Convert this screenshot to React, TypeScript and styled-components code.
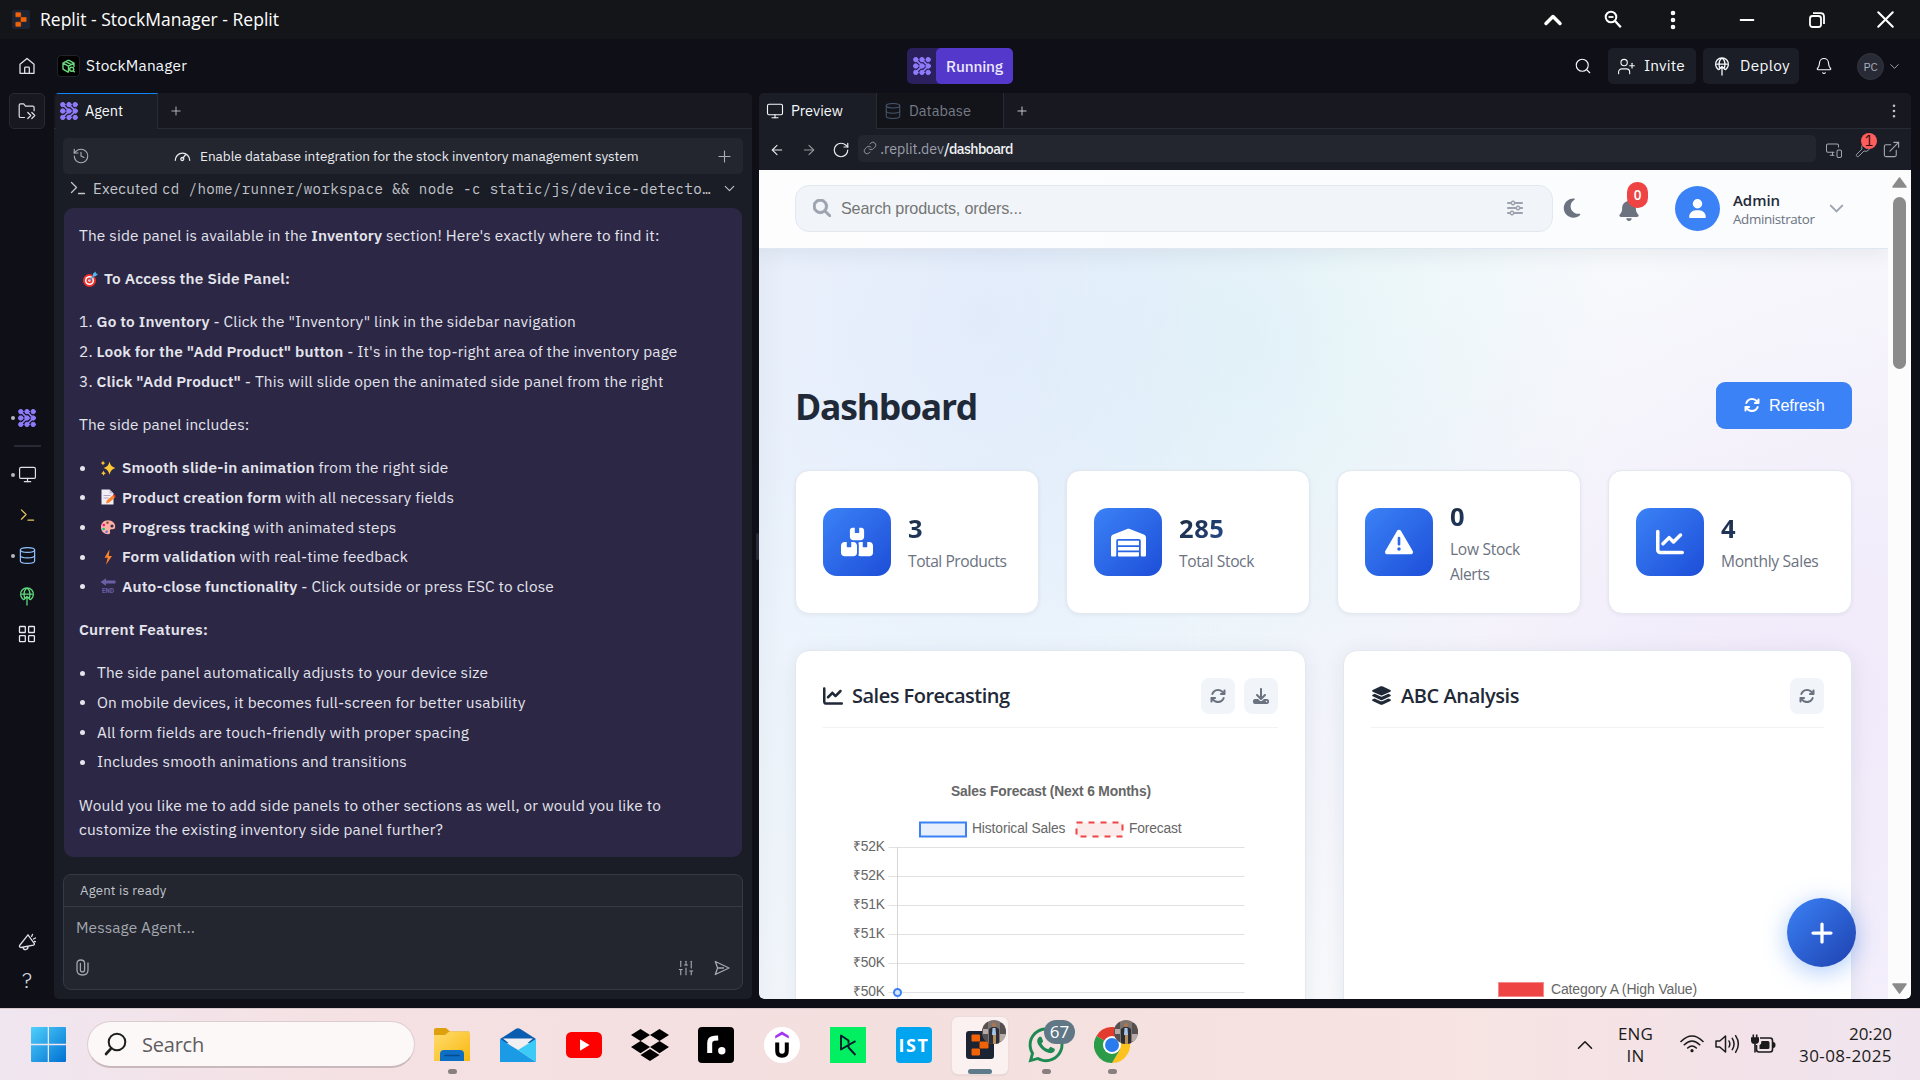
import React, { useLayoutEffect, useRef, useState } from "react";
import styled, { createGlobalStyle, css } from "styled-components";
import {
  ArrowLeft, ArrowRight, Bell, ChevronDown, ChevronUp, Database, EllipsisVertical, ExternalLink,
  History, Link, Minus, Monitor, MonitorSmartphone, Plus,
  RotateCw, Search, UserPlus, Wrench, X, SlidersVertical,
} from "lucide-react";
import {
  FaArrowsRotate, FaBell, FaBoxesStacked, FaChartLine, FaDownload, FaDropbox, FaLayerGroup,
  FaMagnifyingGlass, FaMoon, FaPlus, FaSliders, FaTriangleExclamation, FaUser, FaWarehouse, FaWhatsapp,
} from "react-icons/fa6";

const PLEX = `"IBM Plex Sans", Roboto, "Liberation Sans", sans-serif`;
const SEGOE = `"Segoe UI", "Open Sans", "Noto Sans", sans-serif`;
const ARIAL = `"Liberation Sans", Arial, sans-serif`;
const MONO = `"IBM Plex Mono", "DejaVu Sans Mono", "Liberation Mono", monospace`;

const Global = createGlobalStyle`
  *, *::before, *::after { box-sizing: border-box; }
  body { margin: 0; background: #0f0f17; overflow: hidden; }
  ul, ol, p, h1, h2 { margin: 0; padding: 0; }
  svg { display: block; flex: none; }
`;

/* A single line of text whose tracking is adjusted so that it spans `w` pixels. */
const Line = styled.span`
  display: inline-block;
  white-space: pre;
  flex: none;
`;
function Fit({ w, children }: { w: number; children: React.ReactNode }) {
  const ref = useRef<HTMLSpanElement>(null);
  const [spacing, setSpacing] = useState(0);
  useLayoutEffect(() => {
    const el = ref.current;
    if (!el) return;
    const count = (el.textContent || "").length || 1;
    setSpacing((w - el.getBoundingClientRect().width) / count);
  }, [w]);
  return <Line ref={ref} style={{ letterSpacing: spacing }}>{children}</Line>;
}

const Screen = styled.div`
  width: 1920px;
  height: 1080px;
  display: flex;
  flex-direction: column;
  overflow: hidden;
  background: #0f0f17;
  font-family: ${PLEX};
  color: #f5f9fc;
`;

/* ---------- window title bar ---------- */
const TitleBar = styled.div`
  height: 39px;
  flex: none;
  display: flex;
  align-items: center;
  padding: 0 0 0 12px;
  background: #141519;
  color: #fff;
  font: 400 17.5px ${SEGOE};
`;
const TitleText = styled.div`
  margin-left: 10px;
  padding-bottom: 1px;
  flex: 1;
`;
const WindowControls = styled.div`
  display: grid;
  grid-template-columns: 60px 60px 60px 88px 51px 78px;
  justify-items: center;
  align-items: center;
  > :last-child { margin-left: 9px; }
`;

/* ---------- workspace header ---------- */
const Header = styled.div`
  height: 54px;
  flex: none;
  display: grid;
  grid-template-columns: 907px 106px 1fr;
  align-items: center;
  font-size: 15.4px;
`;
const HeaderLeft = styled.div`
  display: flex;
  align-items: center;
  padding-left: 18px;
`;
const HeaderLabel = styled.div`
  padding-bottom: 2px;
`;
const AppBadge = styled.div`
  width: 23px;
  height: 22px;
  margin: 0 6px 0 21px;
  border-radius: 4px;
  border: 1px solid #22232a;
  background: #000;
  color: #6cd97e;
  display: grid;
  place-items: center;
`;
const RunPill = styled.div`
  height: 36px;
  display: flex;
  border-radius: 5px;
  background: #2b1f5e;
  overflow: hidden;
`;
const RunIcon = styled.div`
  width: 29px;
  display: grid;
  place-items: center;
`;
const RunLabel = styled.div`
  flex: 1;
  display: grid;
  place-items: center;
  border-radius: 5px;
  background: #5438cc;
  font-weight: 500;
  color: #ece8fb;
`;
const HeaderRight = styled.div`
  display: flex;
  align-items: center;
  justify-content: flex-end;
  padding-right: 18px;
`;
const HeaderButton = styled.div<{ $w: number; $ml: number }>`
  width: ${(p) => p.$w}px;
  height: 36px;
  margin-left: ${(p) => p.$ml}px;
  padding-left: 9px;
  display: flex;
  align-items: center;
  gap: 8px;
  border-radius: 5px;
  background: #1b1e26;
`;
const Avatar = styled.div`
  width: 27px;
  height: 27px;
  margin: 0 3px 0 24px;
  border-radius: 50%;
  border: 1px solid #34363f;
  background: #282a35;
  color: #a9b0be;
  font-size: 11.5px;
  display: grid;
  place-items: center;
`;

/* ---------- work area ---------- */
const Work = styled.div`
  height: 915px;
  flex: none;
  display: grid;
  grid-template-columns: 54px 698px 7px 1152px 9px;
  grid-template-rows: 906px;
`;
const Rail = styled.div`
  display: flex;
  flex-direction: column;
  align-items: center;
  color: #dde1e8;
`;
const FolderButton = styled.div`
  width: 36px;
  height: 36px;
  border: 1px solid #282a35;
  border-radius: 5px;
  background: #171820;
  display: grid;
  place-items: center;
`;
const RailItem = styled.div<{ $h: number; $mt?: number; $color?: string }>`
  width: 100%;
  height: ${(p) => p.$h}px;
  margin-top: ${(p) => p.$mt || 0}px;
  color: ${(p) => p.$color || "#dde1e8"};
  display: grid;
  grid-template-columns: 15px 1fr 15px;
  align-items: center;
  justify-items: center;
  font-size: 21px;
  font-weight: 300;
`;
const RailDot = styled.i<{ $on?: boolean }>`
  width: 4px;
  height: 4px;
  justify-self: end;
  border-radius: 50%;
  background: ${(p) => (p.$on ? "#b4b7c0" : "transparent")};
`;
const RailRule = styled.div`
  width: 27px;
  height: 2px;
  margin: 7px 0 5px;
  background: #282a35;
`;

const Panel = styled.div`
  display: flex;
  flex-direction: column;
  min-width: 0;
  border-radius: 5px;
  overflow: hidden;
  background: #1a1d25;
`;
const TabBar = styled.div`
  height: 36px;
  flex: none;
  display: flex;
  background: #171820;
  font-size: 14.6px;
  box-shadow: inset 0 -1px #282a35;
`;
const Tab = styled.div<{ $w: number; $kind: "focus" | "open" | "idle" }>`
  width: ${(p) => p.$w}px;
  display: flex;
  align-items: center;
  gap: 7px;
  padding: 0 0 1px 7px;
  border-right: 1px solid #282a35;
  background: #1a1d25;
  ${(p) => p.$kind === "focus" && css`border-top: 1px solid #0f87ff; margin-left: 2px; padding: 0 0 2px 4px;`}
  ${(p) => p.$kind === "idle" && css`background: #13141a; color: #767b87; box-shadow: inset 0 -1px #282a35;`}
`;
const TabAdd = styled.div`
  width: 36px;
  display: grid;
  place-items: center;
  color: #c2c8cc;
`;
const TabMenu = styled.div`
  margin-left: auto;
  width: 35px;
  display: grid;
  place-items: center;
  color: #c2c8cc;
`;
const Splitter = styled.div`
  display: grid;
  place-items: center end;
  &::after {
    content: "";
    width: 3px;
    height: 27px;
    background: #282a35;
    border-radius: 2px;
  }
`;

/* ---------- agent panel ---------- */
const AgentBody = styled.div`
  flex: 1;
  display: flex;
  flex-direction: column;
  padding: 9px 9px 9px;
`;
const HistoryBar = styled.div`
  height: 36px;
  display: flex;
  align-items: center;
  padding: 0 9px;
  border-radius: 5px;
  background: #23262f;
  color: #a9adb7;
  font-size: 13.6px;
`;
const HistoryTitle = styled.div`
  flex: 1;
  display: flex;
  align-items: center;
  gap: 9px;
  padding: 0 0 1px 84px;
  color: #e8eaee;
`;
const ExecRow = styled.div`
  height: 34px;
  padding: 0 5px 6px 7px;
  display: flex;
  align-items: center;
  color: #c2c5cd;
  font-size: 15px;
`;
const ExecWord = styled.span`
  margin: 0 4px 0 7px;
`;
const Command = styled.span`
  flex: 1;
  font: 400 14.2px ${MONO};
`;
const Message = styled.div`
  height: 649px;
  margin: 0 1px;
  padding: 15px;
  display: flex;
  flex-direction: column;
  gap: 18.5px;
  border-radius: 9px;
  background: #2b2745;
  color: #e4e4ec;
  font-size: 15.4px;
  line-height: 24.7px;
  b { font-weight: 600; }
`;
const MessageList = styled.ul`
  list-style: none;
  display: flex;
  flex-direction: column;
  gap: 5px;
`;
const MessageItem = styled.li`
  height: 24.7px;
  display: flex;
  align-items: center;
`;
const Bullet = styled.i`
  width: 5px;
  height: 5px;
  margin: 1px 12px 0 1px;
  border-radius: 50%;
  background: #e4e4ec;
`;
const Emoji = styled.span`
  display: inline-grid;
  place-items: center;
  width: 18px;
  margin: 0 5px 0 2px;
`;
const Paragraph = styled.p`
  display: flex;
  align-items: center;
  flex-wrap: wrap;
`;
const Composer = styled.div`
  margin-top: 17px;
  height: 116px;
  display: flex;
  flex-direction: column;
  border: 1px solid #373a45;
  border-radius: 8px;
  background: #23262f;
  color: #a3a7b0;
  font-size: 15.4px;
`;
const ComposerStatus = styled.div`
  height: 32px;
  flex: none;
  padding: 0 0 2px 16px;
  display: flex;
  align-items: center;
  border-bottom: 1px solid #373a45;
  color: #c2c5cd;
  font-size: 13.2px;
`;
const ComposerText = styled.div`
  height: 42px;
  padding: 0 0 2px 12px;
  display: flex;
  align-items: center;
`;
const ComposerTools = styled.div`
  height: 38px;
  padding: 0 12px 1px 12px;
  display: flex;
  align-items: center;
  gap: 19px;
  > :first-child { margin-right: auto; }
`;

/* ---------- preview panel ---------- */
const UrlRow = styled.div`
  height: 41px;
  flex: none;
  display: flex;
  align-items: center;
  padding: 0 10px;
  font-size: 14.2px;
  color: #e8eaee;
`;
const UrlBox = styled.div`
  width: 959px;
  height: 27px;
  margin: -2px 9px 0 8px;
  padding: 0 0 1px 5px;
  display: flex;
  align-items: center;
  border-radius: 5px;
  background: #23262f;
  color: #9a9fab;
`;
const UrlPath = styled.span`
  color: #f0f2f5;
  font-weight: 500;
`;
const NavIcon = styled.span<{ $w: number; $dim?: boolean }>`
  width: ${(p) => p.$w}px;
  opacity: ${(p) => (p.$dim ? 0.6 : 1)};
`;
const DevTool = styled.span`
  position: relative;
  margin: 0 11px 0 12px;
`;
const DevBadge = styled.span`
  position: absolute;
  top: -9px;
  left: 6px;
  width: 16px;
  height: 16px;
  border-radius: 50%;
  background: #ff5c5c;
  color: #34070a;
  font-size: 14px;
  line-height: 16px;
  text-align: center;
`;
const PageFrame = styled.div`
  flex: 1;
  display: flex;
  min-height: 0;
  border-radius: 0 0 5px 5px;
  overflow: hidden;
`;
const Page = styled.div`
  position: relative;
  width: 1129px;
  height: 829px;
  overflow: hidden;
  color: #1f2937;
  font-family: ${SEGOE};
  background:
    linear-gradient(90deg, rgba(60, 70, 90, 0.04), rgba(60, 70, 90, 0) 26px),
    radial-gradient(ellipse 380px 400px at 225px 150px, rgba(208, 218, 250, 0.34), transparent),
    radial-gradient(ellipse 360px 360px at 500px 170px, rgba(213, 241, 244, 0.5), transparent),
    radial-gradient(ellipse 620px 460px at 1010px 520px, rgba(232, 216, 248, 0.42), transparent),
    radial-gradient(ellipse 500px 500px at 250px 400px, rgba(222, 238, 252, 0.4), transparent),
    linear-gradient(115deg, #eff5fc, #f6f9fc 45%, #f8fafc 60%, #f5f2fb);
`;
const ScrollTrack = styled.div`
  width: 23px;
  display: flex;
  flex-direction: column;
  align-items: center;
  padding: 7px 0 5px;
  background: #fcfcfc;
`;
const ScrollThumb = styled.div`
  width: 13px;
  height: 172px;
  margin: 9px 0 auto;
  border-radius: 7px;
  background: #8b8b8b;
`;
const SiteHeader = styled.div`
  height: 79px;
  padding: 0 0 2px 36px;
  display: flex;
  align-items: center;
  border-bottom: 1px solid #dfe7f0;
  background: linear-gradient(90deg, #fdfdfe, #fafcfe);
  box-shadow: 0 4px 22px rgba(30, 41, 59, 0.08);
  color: #6b7280;
`;
const SearchField = styled.div`
  width: 758px;
  height: 47px;
  padding: 0 29px 0 17px;
  display: flex;
  align-items: center;
  border: 1px solid #e2e8f0;
  border-radius: 14px;
  background: #f1f5f9;
  color: #9ca3af;
  font: 400 16.2px ${ARIAL};
`;
const SearchHint = styled.span`
  flex: 1;
  margin-left: 10px;
  color: #757575;
`;
const HeadIcon = styled.div<{ $w: number; $ml: number; $top?: number }>`
  position: relative;
  width: ${(p) => p.$w}px;
  margin: ${(p) => p.$top || 0}px 0 0 ${(p) => p.$ml}px;
`;
const AlertCount = styled.span`
  position: absolute;
  left: 9px;
  top: -17px;
  width: 21px;
  height: 26px;
  border-radius: 10px;
  background: #ef4444;
  color: #fff;
  font-size: 13.5px;
  font-weight: 600;
  line-height: 26px;
  text-align: center;
`;
const UserCircle = styled.div`
  width: 45px;
  height: 45px;
  margin: 0 13px 0 37px;
  border-radius: 50%;
  background: #3b82f6;
  color: #fff;
  display: grid;
  place-items: center;
`;
const UserMeta = styled.div`
  width: 81px;
  display: flex;
  flex-direction: column;
  align-items: flex-start;
  font-size: 13.4px;
  line-height: 18px;
  margin: 1px 11px 0 0;
`;
const UserName = styled.div`
  font-size: 15px;
  font-weight: 600;
  color: #1f2937;
  line-height: 20px;
`;
const Main = styled.div`
  padding: 133px 36px 0;
  display: flex;
  flex-direction: column;
`;
const TitleRow = styled.div`
  height: 47px;
  display: flex;
  align-items: center;
  justify-content: space-between;
`;
const PageTitle = styled.h1`
  font-size: 35.5px;
  font-weight: 700;
  line-height: 47px;
  margin-top: 2px;
`;
const RefreshButton = styled.div`
  width: 136px;
  height: 47px;
  display: flex;
  align-items: center;
  padding: 0 0 1px 28px;
  gap: 9px;
  border-radius: 9px;
  background: #3b82f6;
  color: #fff;
  font: 400 16.2px ${ARIAL};
`;
const Stats = styled.div`
  margin-top: 41px;
  display: grid;
  grid-template-columns: repeat(4, 1fr);
  gap: 27px;
`;
const StatCard = styled.div`
  height: 144px;
  padding-left: 27px;
  display: flex;
  align-items: center;
  gap: 17px;
  border: 1px solid #e2e8f0;
  border-radius: 14px;
  background: #fff;
  box-shadow: 0 1px 4px rgba(30, 41, 59, 0.06);
`;
const StatIcon = styled.div`
  width: 68px;
  height: 68px;
  border-radius: 14px;
  background: linear-gradient(135deg, #3b82f6, #1d4ed8);
  color: #fff;
  display: grid;
  place-items: center;
`;
const StatText = styled.div`
  color: #6b7280;
  font-size: 15.6px;
  line-height: 25px;
`;
const StatValue = styled.div`
  width: 118px;
  font-size: 25.5px;
  font-weight: 700;
  line-height: 36px;
  margin-bottom: 3px;
  background: linear-gradient(135deg, #1f2937, #1f3a68 30%, #3b82f6);
  background-clip: text;
  color: transparent;
`;
const StatLabel = styled.div`
  display: flex;
  flex-direction: column;
  align-items: flex-start;
`;
const Charts = styled.div`
  margin-top: 36px;
  display: grid;
  grid-template-columns: 1fr 1fr;
  gap: 37px;
`;
const ChartCard = styled.div`
  height: 500px;
  padding: 0 27px;
  border: 1px solid #e2e8f0;
  border-radius: 14px;
  background: #fff;
  box-shadow: 0 4px 22px rgba(30, 41, 59, 0.08);
`;
const ChartHead = styled.div`
  height: 77px;
  padding-top: 13px;
  display: flex;
  align-items: center;
  gap: 9px;
  border-bottom: 1px solid #f1f2f5;
`;
const ChartTitle = styled.h2`
  flex: 1;
  display: flex;
  align-items: center;
  gap: 9px;
  font-size: 20px;
  font-weight: 600;
  font-family: ${SEGOE};
`;
const ToolButton = styled.div`
  width: 34px;
  height: 36px;
  border-radius: 8px;
  background: #f1f5f9;
  color: #6b7280;
  display: grid;
  place-items: center;
`;
const AbcLegend = styled.div`
  margin-top: 253px;
  display: flex;
  align-items: center;
  justify-content: center;
  gap: 7px;
  color: #666;
  font: 400 14px ${ARIAL};
`;
const RedSwatch = styled.i`
  width: 46px;
  height: 15px;
  border: 1px solid #f58a8a;
  background: #ef4444;
`;
const Fab = styled.div`
  position: absolute;
  right: 32px;
  bottom: 32px;
  width: 69px;
  height: 69px;
  border-radius: 50%;
  background: linear-gradient(135deg, #3b82f6, #1e40af);
  box-shadow: 0 5px 24px rgba(59, 130, 246, 0.42);
  color: #fff;
  display: grid;
  place-items: center;
`;

/* ---------- desktop taskbar ---------- */
const Taskbar = styled.div`
  height: 72px;
  flex: none;
  display: flex;
  align-items: center;
  padding: 0 28px 0 31px;
  border-top: 1px solid #d8c8ca;
  background: linear-gradient(90deg, #f0e6f0, #f5e1e3 18%, #f3dfde 45%, #f7e4e2 75%, #f3e2e8 90%, #f0e5ef);
  color: #1b1b1b;
  font: 400 17px ${SEGOE};
`;
const SearchPill = styled.div`
  width: 328px;
  height: 47px;
  margin: 0 4px 0 21px;
  padding-left: 16px;
  display: flex;
  align-items: center;
  gap: 15px;
  border: 1px solid #dccdd0;
  border-bottom: 2px solid #c9b9bc;
  border-radius: 24px;
  background: #fcf8f8;
  color: #5f5c5d;
  font-size: 20px;
`;
const TaskSlot = styled.div<{ $active?: boolean }>`
  position: relative;
  width: 56px;
  height: 57px;
  margin: 1px 5px 0;
  display: grid;
  place-items: center;
  border-radius: 6px;
  ${(p) => p.$active && css`background: #faf1f0; box-shadow: 0 0 0 1px #ecdcdc, 0 1px 2px #cdbcbc;`}
`;
const RunMark = styled.i<{ $w: number; $color: string }>`
  position: absolute;
  bottom: 0;
  left: calc(50% - ${(p) => p.$w / 2}px);
  width: ${(p) => p.$w}px;
  height: 5px;
  border-radius: 3px;
  background: ${(p) => p.$color};
`;
const Tile = styled.div<{ $bg: string; $round?: string }>`
  width: 36px;
  height: 36px;
  border-radius: ${(p) => p.$round || "4px"};
  background: ${(p) => p.$bg};
  color: #fff;
  font: 700 18px ${SEGOE};
  display: grid;
  place-items: center;
`;
const Corner = styled.div`
  position: absolute;
  top: 3px;
  right: 2px;
`;
const CountBubble = styled.div`
  position: absolute;
  top: 3px;
  left: 26px;
  width: 31px;
  height: 24px;
  border-radius: 12px;
  background: #607786;
  color: #fff;
  font-size: 17px;
  line-height: 24px;
  text-align: center;
`;
const Tray = styled.div`
  margin-left: auto;
  display: flex;
  align-items: center;
`;
const TrayStack = styled.div<{ $align: string; $ml: number }>`
  margin: 1px 0 0 ${(p) => p.$ml}px;
  display: flex;
  flex-direction: column;
  align-items: ${(p) => p.$align};
  line-height: 22.5px;
`;
const TrayIcons = styled.div`
  display: flex;
  align-items: center;
  gap: 11px;
  margin: 0 0 2px 27px;
`;

/* ---------- drawings ---------- */
const AgentGlyph = ({ size = 18 }) => (
  <svg width={size} height={size} viewBox="0 0 18 18" fill="#8f7bfa" stroke="#8f7bfa" strokeLinecap="round">
    {[2.8, 9, 15.2].map((x) => (
      <g key={x}>
        <circle cx={x} cy="2.6" r="2.2" />
        <ellipse cx={x} cy="9" rx="2.3" ry="2.2" />
        <circle cx={x} cy="15.4" r="2.2" />
      </g>
    ))}
    <path d="M3 3l5.6 5.4M3 15l5.6-5.4M9.2 3l5.6 5.4M9.2 15l5.6-5.4" strokeWidth="1.7" />
  </svg>
);
const ReplitGlyph = ({ w, h }: { w: number; h: number }) => (
  <svg width={w} height={h} viewBox="0 0 28 28" preserveAspectRatio="none">
    <rect width="28" height="28" rx="3" fill="#1c2333" />
    <path d="M6 4h7.500v6H6zM6 18h7.500v6H6zM14 11h8v6h-8z" stroke="#f26207" strokeWidth="1" strokeLinejoin="round" fill="#f26207" />
  </svg>
);
const GlobeUp = ({ size = 20 }) => (
  <svg width={size} height={size} viewBox="0 0 20 20" fill="none" stroke="currentColor" strokeWidth="1.3" strokeLinecap="round" strokeLinejoin="round">
    <path d="M6.500 13.600A6.400 6.400 0 1 1 13.500 13.600M3.700 8.200h12.600M10 1.800c-2 1.700-3 4-3 6.400 0 1.700.4 3 1 4.200M10 1.800c2 1.700 3 4 3 6.400 0 1.700-.4 3-1 4.200M10 19v-8.500M7.300 13.200l2.700-2.700 2.700 2.700" />
  </svg>
);
const HomeGlyph = () => (
  <svg width="18" height="18" viewBox="0 0 18 18" fill="none" stroke="#dde1e8" strokeWidth="1.3" strokeLinejoin="round">
    <path d="M2 7.300L9 1.500l7 5.800V16.300H2zM6.700 16.300V11q0-.8.8-.8h3q.8 0 .8.8v5.300" />
  </svg>
);
const FolderGlyph = () => (
  <svg width="18" height="18" viewBox="0 0 18 18" fill="none" stroke="#dde1e8" strokeWidth="1.2" strokeLinecap="round" strokeLinejoin="round">
    <path d="M6.500 15.500H2.500q-1.300 0-1.300-1.300V3.200q0-1.300 1.300-1.300h3.200l1.800 2.300h7.300q1.300 0 1.300 1.300v3.200M9.800 10.500l3 3-3 3M13.800 10.500l3 3-3 3" />
  </svg>
);
const PromptGlyph = ({ w = 16, color = "currentColor" }) => (
  <svg width={w} height="14" viewBox="0 0 16 14" fill="none" stroke={color} strokeWidth="1.3" strokeLinecap="round" strokeLinejoin="round">
    <path d="M1.500 1.500L6.500 6.500l-5 5M8.500 12.500h6" />
  </svg>
);
const GridGlyph = () => (
  <svg width="18" height="18" viewBox="0 0 18 18" fill="none" stroke="#e6e9ee" strokeWidth="1.3">
    <rect x="1.500" y="1.500" width="5.800" height="6" rx=".6" /><rect x="10.600" y="1.500" width="5.800" height="6" rx=".6" />
    <rect x="1.500" y="10.700" width="5.800" height="6" rx=".6" /><rect x="10.600" y="10.700" width="5.800" height="6" rx=".6" />
  </svg>
);
const HornGlyph = () => (
  <svg width="18" height="18" viewBox="0 0 18 18" fill="none" stroke="#dde1e8" strokeWidth="1.3" strokeLinecap="round" strokeLinejoin="round">
    <path d="M10 1.800L1.600 12.500q-.6 1.900 1.300 2L15.500 12.200q1.300-.6.700-1.900zM5 14.300q.5 2.500 2.700 2.300 2.400-.2 2.300-3M13.600 3.400l.9-2M15.500 6l2-1M16.500 8.500l1 .2" />
  </svg>
);
const BoxGlyph = () => (
  <svg width="15" height="15" viewBox="0 0 15 15" fill="none" stroke="currentColor" strokeWidth="1.4" strokeLinejoin="round">
    <path d="M7.500 1.200l5.500 2.900v4M7.500 13.400L2 10.200V4.100l5.500-2.900M2 4.100l5.500 3.100L13 4.100M7.500 7.200v6.200M4.800 2.700l5.500 3" />
    <circle cx="10.700" cy="10.300" r="2" /><path d="M12.200 11.800l1.500 1.500" />
  </svg>
);
const GaugeGlyph = () => (
  <svg width="17" height="13" viewBox="0 0 17 13" fill="none" stroke="currentColor" strokeWidth="1.3" strokeLinecap="round">
    <path d="M1.300 11.300A7.200 7.200 0 1 1 15.700 11.300M9 9l3-3.800" /><circle cx="8.300" cy="10" r="1.500" />
  </svg>
);
const ClipGlyph = () => (
  <svg width="13" height="17" viewBox="0 0 13 17" fill="none" stroke="currentColor" strokeWidth="1.3" strokeLinecap="round">
    <path d="M12 4v7q0 5-5.500 5T1 11V4.500Q1 1 4.800 1t3.800 3.500V11q0 1.900-2.100 1.900T4.400 11V4.500" />
  </svg>
);
const SendGlyph = () => (
  <svg width="16" height="16" viewBox="0 0 16 16" fill="none" stroke="currentColor" strokeWidth="1.3" strokeLinejoin="round">
    <path d="M1.300 1.500L15 8 1.300 14.500 3.600 8zM3.600 8H10" />
  </svg>
);
const ZoomOutGlyph = () => (
  <svg width="18" height="19" viewBox="0 0 18 19" fill="none" stroke="#fff" strokeWidth="2">
    <circle cx="7" cy="7" r="5.300" /><path d="M4.500 7h5" strokeWidth="1.800" /><path d="M10.800 10.800L16.800 17.300" strokeWidth="2.400" />
  </svg>
);
const RestoreGlyph = () => (
  <svg width="16" height="16" viewBox="0 0 16 16" fill="none" stroke="#fff" strokeWidth="1.800">
    <rect x="1" y="4" width="11" height="11" rx="2.500" /><path d="M4 1.200h7.500Q15 1.200 15 4.700V12" />
  </svg>
);
const Triangle = ({ down = false }) => (
  <svg width="15" height="11" viewBox="0 0 15 11" fill="#8b8b8b" stroke="#8b8b8b" strokeWidth="1.500" strokeLinejoin="round">
    <path d={down ? "M1 1h13L7.500 10z" : "M1 10h13L7.500 1z"} />
  </svg>
);
const emojis: Record<string, React.ReactNode> = {
  target: (
    <>
      <circle cx="7.500" cy="9.500" r="6.500" fill="#f0312b" /><circle cx="7.500" cy="9.500" r="4.500" fill="#fff" />
      <circle cx="7.500" cy="9.500" r="3" fill="#f0312b" /><circle cx="7.500" cy="9.500" r="1.200" fill="#fff" />
      <path d="M7.500 9.500L12.500 4" stroke="#3b9ce0" strokeWidth="1.200" /><path d="M11 5.300V2.800L13.500.5l.5 2 2 .5-2.300 2.300z" fill="#4db8f5" />
    </>
  ),
  sparkle: (
    <path fill="#fcc934" d="M9.500 1.500q.8 5 5.900 6.500-5.100 1.500-5.900 6.800Q8.700 9.500 3.600 8q5.100-1.500 5.900-6.500zM3 .5q.3 2 2.200 2.500Q3.300 3.500 3 5.500 2.700 3.500.8 3 2.700 2.500 3 .5zM3.500 10.500q.3 2.200 2.300 2.700-2 .5-2.300 2.600-.3-2.100-2.300-2.600 2-.5 2.300-2.700z" />
  ),
  memo: (
    <>
      <path d="M1.500.5h8l4 4v11h-12z" fill="#f1eef6" /><path d="M9.500.5v4h4z" fill="#c9c1d8" />
      <path d="M3.500 6.500h7M3.500 9h5" stroke="#b3a7c6" /><path d="M6 14.500l.8-3 6-5.300 2.200 2.300-6 5.200z" fill="#ff822d" /><path d="M12.800 6.200l1.400-.7 1.500 1.500-.7 1.500z" fill="#f8312f" />
    </>
  ),
  palette: (
    <>
      <path d="M8 1.300c4.500 0 7.300 3 7.200 6.500 0 2.300-1.700 2.700-3.200 2.400-1.500-.2-2.500.5-2 2 .5 1.600 0 3-2 3-4 0-7-2.900-7-7s2.900-6.900 7-6.900z" fill="#ffb0a3" />
      <circle cx="7.500" cy="3.800" r="1.300" fill="#8c5543" /><circle cx="3.800" cy="6" r="1.300" fill="#f70a8d" /><circle cx="3.600" cy="10" r="1.300" fill="#00d26a" />
      <circle cx="6.600" cy="12.800" r="1.300" fill="#6b6ff2" /><circle cx="12" cy="7" r="1.600" fill="#3a3050" />
    </>
  ),
  bolt: <path d="M9.500.5L4.500 8.800h3.200L6 15.700 12 6.900H8.800z" fill="#ff822d" />,
  end: (
    <>
      <path d="M6 .3L.5 4 6 7.700V5.500h9.500v-3H6z" fill="#6d5fa6" />
      <text x="2" y="14.800" fontSize="6.500" fontWeight="700" fontFamily="Roboto" fill="#6d5fa6" textLength="12" lengthAdjust="spacingAndGlyphs">END</text>
    </>
  ),
};
const EmojiPic = ({ name }: { name: string }) => (
  <Emoji><svg width="16" height="16" viewBox="0 0 16 16" overflow="visible" fill="none">{emojis[name]}</svg></Emoji>
);
const Photo = ({ size = 24 }) => (
  <svg width={size} height={size} viewBox="0 0 24 24">
    <defs><clipPath id="round"><circle cx="12" cy="12" r="12" /></clipPath></defs>
    <g clipPath="url(#round)">
      <rect width="24" height="24" fill="#7d736f" /><path d="M0 0h6v24H0zM18 3h6v12h-6z" fill="#55504f" /><path d="M1 9h5v5H1zM18 14h6v7h-6z" fill="#b5aaa6" />
      <path d="M7 24V9l3-2h4l3 2v15z" fill="#2a2d36" /><path d="M10.500 8h3l.5 7h-4z" fill="#a9c6e8" /><circle cx="12" cy="5" r="2.300" fill="#a87655" /><path d="M11 15h3v9h-3z" fill="#b9905c" />
    </g>
  </svg>
);
const ExplorerGlyph = () => (
  <svg width="36" height="34" viewBox="0 0 36 34">
    <defs><linearGradient id="fold" x1="0" y1="0" x2="1" y2="1"><stop offset="0" stopColor="#ffdc6e" /><stop offset="1" stopColor="#f9b80e" /></linearGradient></defs>
    <path d="M0 2q0-2 2-2h10l4 3.500h19V8H0z" fill="#dfa00f" /><path d="M0 7h11l4-3.300h19q2 0 2 2V33H0z" fill="url(#fold)" />
    <path d="M6 33v-7q0-4 4-4h16q4 0 4 4v7z" fill="#0c6fc4" /><path d="M11 27.500h14" stroke="#0a4a8c" strokeWidth="1.600" strokeLinecap="round" />
  </svg>
);
const MailGlyph = () => (
  <svg width="36" height="34" viewBox="0 0 36 34">
    <path d="M0 11L16 .8q2-1.200 4 0L36 11l-5 4H5z" fill="#0a5cb0" /><path d="M3 10.500h30L18 23z" fill="#f0f0f2" />
    <path d="M0 11l18 11L36 34H0z" fill="#1b9be6" /><path d="M36 11L18 22l18 12z" fill="#3ccbf7" />
  </svg>
);
const YoutubeGlyph = () => (
  <svg width="36" height="26" viewBox="0 0 36 26"><rect width="36" height="26" rx="5.500" fill="#f00" /><path d="M14 7.300L23.500 13 14 18.700z" fill="#fff" /></svg>
);
const RoadmapGlyph = () => (
  <svg width="36" height="36" viewBox="0 0 36 36"><path d="M11.700 26V16q0-4.500 4.500-4.800l4-.2" stroke="#fff" strokeWidth="5" fill="none" /><circle cx="23.800" cy="23.800" r="3.700" fill="#fff" /></svg>
);
const UdemyGlyph = () => (
  <svg width="36" height="36" viewBox="0 0 36 36" fill="none"><path d="M11.200 11.500V8.700L18 4.600l6.800 4.100v2.800L18 7.800z" fill="#a435f0" /><path d="M13.200 15.500v8.200q0 5 4.800 5t4.800-5v-8.200" stroke="#000" strokeWidth="4" /></svg>
);
const DataCampGlyph = () => (
  <svg width="36" height="36" viewBox="0 0 36 36" fill="none" stroke="#05192d" strokeWidth="1.900" strokeLinejoin="round"><path d="M18.500 16.500v-3L11 8.500v14l7.500-4.500 7-3.800M18.500 18v2.500l7 7.500" /></svg>
);
const ChromeGlyph = () => (
  <svg width="36" height="36" viewBox="0 0 36 36">
    <path d="M18 18L2.400 9A18 18 0 0 1 33.600 9z" fill="#e33b2e" /><path d="M18 18L2.400 9A18 18 0 0 0 18 36z" fill="#2c9b48" />
    <path d="M18 18h0L33.600 9A18 18 0 0 1 18 36l7.800-13.500z" fill="#fcc31e" /><path d="M18 36l8-13.500H18L10 22z" fill="#2c9b48" /><path d="M18 9h15.600L26 14z" fill="#e33b2e" />
    <circle cx="18" cy="18" r="9" fill="#fff" /><circle cx="18" cy="18" r="7" fill="#2a7bee" />
  </svg>
);
const WindowsGlyph = () => (
  <svg width="35" height="35" viewBox="0 0 35 35">
    <defs><linearGradient id="win" x1="0" y1="0" x2="1" y2="1"><stop offset="0" stopColor="#4fd0fb" /><stop offset="1" stopColor="#0070d2" /></linearGradient></defs>
    <path fill="url(#win)" d="M1 0h15.700v16.800H0V1q0-1 1-1zM18 0h16q1 0 1 1v15.800H18zM0 18.200h16.700V35H1q-1 0-1-1zM18 18.200h17V34q0 1-1 1H18z" />
  </svg>
);
const LensGlyph = () => (
  <svg width="23" height="24" viewBox="0 0 23 24" fill="none" stroke="#1f1f1f" strokeWidth="2" strokeLinecap="round"><circle cx="13" cy="10" r="8.300" /><path d="M7.200 16.300L2 22" strokeWidth="2.600" /></svg>
);
const WifiGlyph = () => (
  <svg width="24" height="18" viewBox="0 0 24 18" fill="none" stroke="#1b1b1b" strokeWidth="1.600" strokeLinecap="round">
    <path d="M1 6.500Q12-4.500 23 6.500M4.300 9.800q7.700-7.600 15.400 0M7.700 13q4.300-4 8.600 0" /><circle cx="12" cy="15.700" r="1.600" fill="#1b1b1b" stroke="none" />
  </svg>
);
const VolumeGlyph = () => (
  <svg width="25" height="20" viewBox="0 0 25 20" fill="none" stroke="#1b1b1b" strokeWidth="1.500" strokeLinecap="round" strokeLinejoin="round">
    <path d="M1 7v6h3.800L10.500 18V2L4.800 7zM14 7q1.700 3 0 6M17.300 4.300q3.500 5.700 0 11.400M20.600 1.700q5.500 8.300 0 16.600" />
  </svg>
);
const BatteryGlyph = () => (
  <svg width="25" height="20" viewBox="0 0 25 20" fill="none" stroke="#1b1b1b" strokeWidth="1.600">
    <path d="M9 4h10q2.500 0 2.500 2.500v9q0 2.500-2.500 2.500H8q-2.500 0-2.500-2.500V11" /><path d="M10.500 7H17q1.500 0 1.500 1.500v5Q18.500 15 17 15H8.500v-4q2-1 2-4z" fill="#1b1b1b" stroke="none" /><path d="M22 8q2.500 0 2.500 3T22 14z" fill="#1b1b1b" stroke="none" />
    <path d="M.8 4h6.400v2.500q0 2.700-3.200 2.700T.8 6.500zM2.300.5V4M5.700.5V4M4 9v9.500" fill="#1b1b1b" />
  </svg>
);

const ticks = ["₹52K", "₹52K", "₹51K", "₹51K", "₹50K", "₹50K"];
const ForecastChart = () => (
  <svg width="455" height="290" viewBox="0 0 455 290" fontFamily="Liberation Sans, Arial, sans-serif" fontSize="13.800" fill="#666">
    <text x="128" y="67.500" fontWeight="700" textLength="200">Sales Forecast (Next 6 Months)</text>
    <rect x="97" y="94.500" width="46" height="14" fill="#e8effc" stroke="#3b82f6" strokeWidth="2" />
    <text x="149" y="104.500" textLength="93.500">Historical Sales</text>
    <rect x="253.500" y="94.500" width="46" height="14" fill="#fcebeb" stroke="#ef4444" strokeWidth="2" strokeDasharray="6 6" />
    <text x="306" y="104.500" textLength="52.500">Forecast</text>
    {ticks.map((label, i) => (
      <g key={i}>
        <text x="30" y={122.500 + i * 29} textLength="32">{label}</text>
        <path d={`M65.500 ${119.500 + i * 29}H421.500`} stroke="#e1e1e1" />
      </g>
    ))}
    <path d="M74.500 119V290" stroke="#d5d5d5" />
    <circle cx="74.500" cy="264.500" r="3.500" fill="#d8e6fd" stroke="#3b82f6" strokeWidth="2" />
  </svg>
);

const features = [
  { icon: "sparkle", bold: "Smooth slide-in animation", rest: " from the right side", w: 326.5 },
  { icon: "memo", bold: "Product creation form", rest: " with all necessary fields", w: 332 },
  { icon: "palette", bold: "Progress tracking", rest: " with animated steps", w: 274.5 },
  { icon: "bolt", bold: "Form validation", rest: " with real-time feedback", w: 286 },
  { icon: "end", bold: "Auto-close functionality", rest: " - Click outside or press ESC to close", w: 432 },
];
const steps = [
  { n: "1. ", bold: "Go to Inventory", rest: ` - Click the "Inventory" link in the sidebar navigation`, w: 497 },
  { n: "2. ", bold: `Look for the "Add Product" button`, rest: " - It's in the top-right area of the inventory page", w: 598.5 },
  { n: "3. ", bold: `Click "Add Product"`, rest: " - This will slide open the animated side panel from the right", w: 584.5 },
];
const current = [
  { text: "The side panel automatically adjusts to your device size", w: 391 },
  { text: "On mobile devices, it becomes full-screen for better usability", w: 428.5 },
  { text: "All form fields are touch-friendly with proper spacing", w: 372 },
  { text: "Includes smooth animations and transitions", w: 310 },
];
const stats = [
  { icon: <FaBoxesStacked size={32} />, value: "3", vw: 14, label: ["Total Products"], lw: [98.5] },
  { icon: <FaWarehouse size={35} />, value: "285", vw: 45.5, label: ["Total Stock"], lw: [75] },
  { icon: <FaTriangleExclamation size={28} />, value: "0", vw: 15, label: ["Low Stock", "Alerts"], lw: [70, 39.5] },
  { icon: <FaChartLine size={28} />, value: "4", vw: 15, label: ["Monthly Sales"], lw: [97.5] },
];

const AgentPanel = () => (
  <Panel>
    <TabBar>
      <Tab $w={102} $kind="focus"><AgentGlyph /><Fit w={38}>Agent</Fit></Tab>
      <TabAdd><Plus size={14} strokeWidth={1.5} /></TabAdd>
    </TabBar>
    <AgentBody>
      <HistoryBar>
        <History size={18} strokeWidth={1.5} />
        <HistoryTitle><GaugeGlyph /><Fit w={438.5}>Enable database integration for the stock inventory management system</Fit></HistoryTitle>
        <Plus size={19} strokeWidth={1.4} />
      </HistoryBar>
      <ExecRow>
        <PromptGlyph />
        <ExecWord><Fit w={65}>Executed</Fit></ExecWord>
        <Command><Fit w={549}>cd /home/runner/workspace && node -c static/js/device-detecto…</Fit></Command>
        <ChevronDown size={17} strokeWidth={1.5} />
      </ExecRow>
      <Message>
        <Paragraph><Fit w={580.5}>The side panel is available in the <b>Inventory</b> section! Here's exactly where to find it:</Fit></Paragraph>
        <Paragraph><EmojiPic name="target" /><Fit w={186}><b>To Access the Side Panel:</b></Fit></Paragraph>
        <MessageList>
          {steps.map((s) => <MessageItem key={s.n}><Fit w={s.w}>{s.n}<b>{s.bold}</b>{s.rest}</Fit></MessageItem>)}
        </MessageList>
        <Paragraph><Fit w={170.5}>The side panel includes:</Fit></Paragraph>
        <MessageList>
          {features.map((f) => (
            <MessageItem key={f.icon}><Bullet /><EmojiPic name={f.icon} /><Fit w={f.w}><b>{f.bold}</b>{f.rest}</Fit></MessageItem>
          ))}
        </MessageList>
        <Paragraph><Fit w={129}><b>Current Features:</b></Fit></Paragraph>
        <MessageList>
          {current.map((c) => <MessageItem key={c.text}><Bullet /><Fit w={c.w}>{c.text}</Fit></MessageItem>)}
        </MessageList>
        <Paragraph>
          <Fit w={582}>Would you like me to add side panels to other sections as well, or would you like to</Fit>
          <Fit w={364}>customize the existing inventory side panel further?</Fit>
        </Paragraph>
      </Message>
      <Composer>
        <ComposerStatus><Fit w={86.5}>Agent is ready</Fit></ComposerStatus>
        <ComposerText><Fit w={119}>Message Agent...</Fit></ComposerText>
        <ComposerTools>
          <ClipGlyph />
          <SlidersVertical size={18} strokeWidth={1.5} />
          <SendGlyph />
        </ComposerTools>
      </Composer>
    </AgentBody>
  </Panel>
);

const Dashboard = () => (
  <PageFrame>
    <Page>
      <SiteHeader>
        <SearchField>
          <FaMagnifyingGlass size={18} stroke="currentColor" strokeWidth={24} />
          <SearchHint><Fit w={181}>Search products, orders...</Fit></SearchHint>
          <FaSliders size={16} />
        </SearchField>
        <HeadIcon $w={19} $ml={8}><FaMoon size={22} /></HeadIcon>
        <HeadIcon $w={20} $ml={38} $top={4}><FaBell size={22} /><AlertCount>0</AlertCount></HeadIcon>
        <UserCircle><FaUser size={19} /></UserCircle>
        <UserMeta>
          <UserName><Fit w={47}>Admin</Fit></UserName>
          <Fit w={81.5}>Administrator</Fit>
        </UserMeta>
        <ChevronDown size={23} strokeWidth={2} color="#9ca3af" />
      </SiteHeader>
      <Main>
        <TitleRow>
          <PageTitle><Fit w={182}>Dashboard</Fit></PageTitle>
          <RefreshButton><FaArrowsRotate size={16} /><Fit w={55.5}>Refresh</Fit></RefreshButton>
        </TitleRow>
        <Stats>
          {stats.map((s) => (
            <StatCard key={s.label[0]}>
              <StatIcon>{s.icon}</StatIcon>
              <StatText>
                <StatValue><Fit w={s.vw}>{s.value}</Fit></StatValue>
                <StatLabel>{s.label.map((l, i) => <Fit key={l} w={s.lw[i]}>{l}</Fit>)}</StatLabel>
              </StatText>
            </StatCard>
          ))}
        </Stats>
        <Charts>
          <ChartCard>
            <ChartHead>
              <ChartTitle><FaChartLine size={20} /><Fit w={157.5}>Sales Forecasting</Fit></ChartTitle>
              <ToolButton><FaArrowsRotate size={16} /></ToolButton>
              <ToolButton><FaDownload size={16} /></ToolButton>
            </ChartHead>
            <ForecastChart />
          </ChartCard>
          <ChartCard>
            <ChartHead>
              <ChartTitle><FaLayerGroup size={21} /><Fit w={118}>ABC Analysis</Fit></ChartTitle>
              <ToolButton><FaArrowsRotate size={16} /></ToolButton>
            </ChartHead>
            <AbcLegend><RedSwatch /><Fit w={146}>Category A (High Value)</Fit></AbcLegend>
          </ChartCard>
        </Charts>
      </Main>
      <Fab><FaPlus size={26} /></Fab>
    </Page>
    <ScrollTrack><Triangle /><ScrollThumb /><Triangle down /></ScrollTrack>
  </PageFrame>
);

const PreviewPanel = () => (
  <Panel>
    <TabBar>
      <Tab $w={118} $kind="open"><Monitor size={18} strokeWidth={1.5} /><Fit w={52}>Preview</Fit></Tab>
      <Tab $w={127} $kind="idle"><Database size={18} strokeWidth={1.4} color="#48566b" /><Fit w={62}>Database</Fit></Tab>
      <TabAdd><Plus size={14} strokeWidth={1.7} /></TabAdd>
      <TabMenu><EllipsisVertical size={18} strokeWidth={1.5} /></TabMenu>
    </TabBar>
    <UrlRow>
      <NavIcon $w={32}><ArrowLeft size={16} strokeWidth={1.6} /></NavIcon>
      <NavIcon $w={31} $dim><ArrowRight size={16} strokeWidth={1.6} /></NavIcon>
      <NavIcon $w={18}><RotateCw size={18} strokeWidth={1.6} /></NavIcon>
      <UrlBox>
        <Link size={14} strokeWidth={1.5} />
        <Fit w={67}> .replit.dev</Fit><UrlPath><Fit w={69}>/dashboard</Fit></UrlPath>
      </UrlBox>
      <MonitorSmartphone size={18} strokeWidth={1.4} color="#a3a7b0" />
      <DevTool><Wrench size={16} strokeWidth={1.4} color="#a3a7b0" /><DevBadge>1</DevBadge></DevTool>
      <ExternalLink size={19} strokeWidth={1.4} color="#a3a7b0" />
    </UrlRow>
    <Dashboard />
  </Panel>
);

export default function App() {
  return (
    <Screen>
      <Global />
      <TitleBar>
        <ReplitGlyph w={18} h={19} />
        <TitleText><Fit w={239}>Replit - StockManager - Replit</Fit></TitleText>
        <WindowControls>
          <ChevronUp size={28} strokeWidth={3} />
          <ZoomOutGlyph />
          <EllipsisVertical size={24} strokeWidth={2.6} />
          <Minus size={22} strokeWidth={2} />
          <RestoreGlyph />
          <X size={29} strokeWidth={1.7} />
        </WindowControls>
      </TitleBar>
      <Header>
        <HeaderLeft>
          <HomeGlyph />
          <AppBadge><BoxGlyph /></AppBadge>
          <HeaderLabel><Fit w={101}>StockManager</Fit></HeaderLabel>
        </HeaderLeft>
        <RunPill>
          <RunIcon><AgentGlyph /></RunIcon>
          <RunLabel><Fit w={57}>Running</Fit></RunLabel>
        </RunPill>
        <HeaderRight>
          <Search size={18} strokeWidth={1.5} />
          <HeaderButton $w={88} $ml={16}><UserPlus size={19} strokeWidth={1.4} /><HeaderLabel><Fit w={41}>Invite</Fit></HeaderLabel></HeaderButton>
          <HeaderButton $w={96} $ml={7}><GlobeUp /><HeaderLabel><Fit w={50}>Deploy</Fit></HeaderLabel></HeaderButton>
          <HeadIcon $w={18} $ml={16}><Bell size={18} strokeWidth={1.5} /></HeadIcon>
          <Avatar>PC</Avatar>
          <ChevronDown size={15} strokeWidth={1.6} color="#9aa0ae" />
        </HeaderRight>
      </Header>
      <Work>
        <Rail>
          <FolderButton><FolderGlyph /></FolderButton>
          <RailItem $h={40} $mt={270}><RailDot $on /><AgentGlyph /></RailItem>
          <RailRule />
          <RailItem $h={40} $mt={3}><RailDot $on /><Monitor size={19} strokeWidth={1.5} /></RailItem>
          <RailItem $h={40} $mt={1} $color="#e8c95b"><RailDot /><PromptGlyph w={15} /></RailItem>
          <RailItem $h={41} $color="#8fc1ff"><RailDot $on /><Database size={19} strokeWidth={1.5} /></RailItem>
          <RailItem $h={40} $color="#5fd87c"><RailDot /><GlobeUp size={20} /></RailItem>
          <RailItem $h={38}><RailDot /><GridGlyph /></RailItem>
          <RailItem $h={40} $mt={269}><RailDot /><HornGlyph /></RailItem>
          <RailItem $h={38}><RailDot />?</RailItem>
        </Rail>
        <AgentPanel />
        <Splitter />
        <PreviewPanel />
      </Work>
      <Taskbar>
        <WindowsGlyph />
        <SearchPill><LensGlyph /><Fit w={62}>Search</Fit></SearchPill>
        <TaskSlot><ExplorerGlyph /><RunMark $w={9} $color="#8a7f80" /></TaskSlot>
        <TaskSlot><MailGlyph /></TaskSlot>
        <TaskSlot><YoutubeGlyph /></TaskSlot>
        <TaskSlot><FaDropbox size={38} color="#000" /></TaskSlot>
        <TaskSlot><Tile $bg="#000"><RoadmapGlyph /></Tile></TaskSlot>
        <TaskSlot><Tile $bg="#fff" $round="50%"><UdemyGlyph /></Tile></TaskSlot>
        <TaskSlot><Tile $bg="#03ef62" $round="0"><DataCampGlyph /></Tile></TaskSlot>
        <TaskSlot><Tile $bg="#00a4ef"><Fit w={31}>IST</Fit></Tile></TaskSlot>
        <TaskSlot $active><ReplitGlyph w={28} h={28} /><Corner><Photo /></Corner><RunMark $w={24} $color="#5f7a8a" /></TaskSlot>
        <TaskSlot><FaWhatsapp size={40} color="#1c8a52" /><CountBubble>67</CountBubble><RunMark $w={9} $color="#8a7f80" /></TaskSlot>
        <TaskSlot><ChromeGlyph /><Corner><Photo /></Corner><RunMark $w={9} $color="#8a7f80" /></TaskSlot>
        <Tray>
          <ChevronUp size={26} strokeWidth={1.5} />
          <TrayStack $align="center" $ml={20}><Fit w={35}>ENG</Fit><Fit w={18}>IN</Fit></TrayStack>
          <TrayIcons><WifiGlyph /><VolumeGlyph /><BatteryGlyph /></TrayIcons>
          <TrayStack $align="flex-end" $ml={23}><Fit w={43}>20:20</Fit><Fit w={93}>30-08-2025</Fit></TrayStack>
        </Tray>
      </Taskbar>
    </Screen>
  );
}
